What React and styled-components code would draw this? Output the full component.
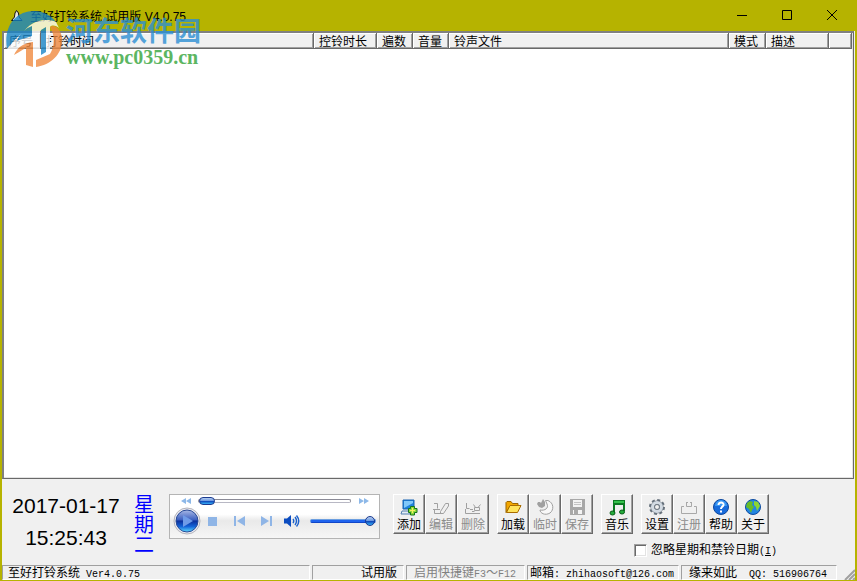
import React, { useState } from 'react'
import styled, { createGlobalStyle } from 'styled-components'

const GlobalStyle = createGlobalStyle`
  * { box-sizing: border-box; }
  body {
    margin: 0;
    background: #f0f0f0;
    color: #000;
    font: 12px/16px "Liberation Sans", "Noto Sans CJK SC", sans-serif;
  }
  button, input { font: inherit; color: inherit; }
`

const Window = styled.div`
  position: relative;
  display: flex;
  flex-direction: column;
  min-height: 100vh;
  border: solid #b6b300;
  border-width: 0 2px 1px 2px;
  background: #f0f0f0;
`

const TitleBar = styled.header`
  display: flex;
  align-items: center;
  height: 31px;
  padding-left: 8px;
  background: #b6b300;
`

const Title = styled.h1`
  flex: 1;
  margin: 0 0 0 6px;
  padding-top: 2px;
  font-size: 12px;
  font-weight: normal;
`

const CaptionButton = styled.button`
  display: flex;
  align-items: center;
  justify-content: center;
  width: 45px;
  height: 30px;
  padding: 0;
  border: 0;
  background: none;
`

const ListFrame = styled.main`
  flex: 1;
  margin-right: 1px;
  border: 1px solid #696969;
  border-top: 2px solid #808080;
  border-left: 2px solid #808080;
  box-shadow: inset -1px -1px #e3e3e3;
  background: #fff;
`

const BellTable = styled.table`
  width: calc(100% - 1px);
  table-layout: fixed;
  border-collapse: separate;
  border-spacing: 0;
`

const HeadCell = styled.th`
  width: ${p => (p.$w ? p.$w + 'px' : 'auto')};
  height: 16px;
  padding: 3px 0 0 5px;
  border: solid #696969;
  border-width: 0 1px 1px 0;
  box-shadow: inset 1px 1px #fff, inset -1px -1px #a0a0a0;
  background: #f0f0f0;
  font-weight: normal;
  line-height: 12px;
  text-align: left;
  white-space: nowrap;
`

const ControlPanel = styled.section`
  display: flex;
  align-items: flex-start;
  height: 85px;
  padding: 15px 8px 0;
`

const Clock = styled.div`
  width: 112px;
  margin-top: -4px;
  font-size: 21px;
  line-height: 32px;
  text-align: center;
  white-space: nowrap;
`

const Weekday = styled.div`
  width: 20px;
  margin: 1px 15px 0 12px;
  color: #00f;
  font-size: 20px;
  line-height: 20px;
`

const Player = styled.div`
  width: 211px;
  height: 45px;
  padding: 0 3px;
  border: 1px solid #b4b4b4;
  background: linear-gradient(#fff 0, #fff 45%, #e9e9e9 60%, #f6f6f6 100%);
`

const PlayerRow = styled.div`
  display: flex;
  align-items: center;
  height: ${p => p.$h}px;
`

const PlayerButton = styled.button`
  display: flex;
  align-items: center;
  justify-content: center;
  flex: none;
  width: ${p => p.$w || 25}px;
  height: 100%;
  padding: 0;
  border: 0;
  background: none;
`

const Slider = styled.input`
  appearance: none;
  flex: 1;
  min-width: 0;
  height: 12px;
  margin: 0 0 0 ${p => (p.$volume ? 4 : 0)}px;
  background: none;

  &::-webkit-slider-runnable-track {
    height: 4px;
    border: 1px solid ${p => (p.$volume ? '#6c9fe0' : '#8a8a96')};
    border-bottom-color: ${p => (p.$volume ? '#1146c8' : '#b8b8c4')};
    border-radius: 2px;
    background: ${p => (p.$volume ? '#1e63ee' : '#fff')};
  }
  &::-webkit-slider-thumb {
    appearance: none;
    width: ${p => (p.$volume ? 10 : 16)}px;
    height: ${p => (p.$volume ? 10 : 8)}px;
    margin-top: ${p => (p.$volume ? -4 : -3)}px;
    border: 1px solid #1a3a90;
    border-radius: 5px;
    background: linear-gradient(#b4cdf2 0, #6f9be0 45%, #0b3cb4 50%, #35b2f8 100%);
  }
`

const ToolBar = styled.div`
  display: flex;
  gap: 8px;
  padding-left: 13px;
`

const ToolGroup = styled.div`
  display: flex;
`

const ToolButton = styled.button`
  display: flex;
  flex-direction: column;
  align-items: center;
  width: 32px;
  height: 40px;
  padding: 4px 0 0;
  border: 1px solid;
  border-color: #fff #696969 #696969 #fff;
  box-shadow: inset -1px -1px #a0a0a0;
  background: #f0f0f0;
  line-height: 16px;
  white-space: nowrap;

  &:disabled { color: #8c8c8c; }
  svg { display: block; margin-bottom: 2px; }
`

const Right = styled.div`
  display: flex;
  flex-direction: column;
`

const IgnoreOption = styled.label`
  display: flex;
  align-items: center;
  align-self: flex-end;
  gap: 4px;
  height: 16px;
  margin: 8px -8px 0 0;
  white-space: nowrap;

  span { padding-top: 1px; }
`

const CheckBox = styled.input`
  appearance: none;
  width: 13px;
  height: 13px;
  margin: 0;
  border: 1px solid;
  border-color: #a0a0a0 #fff #fff #a0a0a0;
  box-shadow: inset 1px 1px #696969, inset -1px -1px #e3e3e3;
  background: #fff;

  &:checked { background: #fff linear-gradient(#000, #000) center / 5px 5px no-repeat; }
`

// half width characters of the status line
const Mono = styled.span`
  font-family: "Liberation Mono", monospace;
  font-size: 10px;
  white-space: pre;
`

const StatusBar = styled.footer`
  display: flex;
  gap: 2px;
  height: 16px;
  padding-top: 1px;
`

const Pane = styled.div`
  flex: ${p => (p.$w ? 'none' : 1)};
  width: ${p => (p.$w ? p.$w + 'px' : 'auto')};
  height: 15px;
  padding: 0 6px 0 ${p => p.$pad || 5}px;
  overflow: hidden;
  border: 1px solid;
  border-color: #a0a0a0 #fff #fff #a0a0a0;
  color: ${p => (p.$muted ? '#808080' : '#000')};
  line-height: 14px;
  text-align: ${p => (p.$right ? 'right' : 'left')};
  white-space: nowrap;
`

const Grip = styled.div`
  display: flex;
  align-items: flex-end;
  justify-content: flex-end;
  width: 16px;
`

const Watermark = styled.div`
  position: absolute;
  top: 10px;
  left: 3px;
  display: flex;
  gap: 3px;
  pointer-events: none;
`

const SiteName = styled.div`
  color: #2c8fd4;
  opacity: 0.8;
  font: bold 27px/40px "Noto Sans CJK SC", sans-serif;
`

const SiteUrl = styled.div`
  color: #5cb662;
  font: bold 20px/14px "Liberation Serif", serif;
`

const BellIcon = () => (
  <svg width="14" height="14" viewBox="0 0 14 14">
    <path d="M6.500 1.500 L8.500 4 L9 8 L12 11.500 H1.500 L4.500 8 L5 4 Z" fill="#ddd" stroke="#111" />
    <path d="M6 4 L5.500 9 L4 10.500 H7 Z" fill="#fff" />
  </svg>
)

const SiteLogo = () => (
  <svg width="58" height="58" viewBox="0 0 58 58" opacity="0.78">
    <path d="M2 39 C-2 16 11 1 29 1 C38 1 46 5 51 12 C38 7 25 12 18 23 C12 27 7 33 2 39 Z" fill="#1684c6" />
    <path d="M2 39 C7 33 12 27 18 23 C25 12 38 7 51 12 L54 18 C50 15 47 15 45 17 V46 L39 49 V19 L35 21 V47 L28 51 V33 C22 34 18 36 15 39 L8 47 Z" fill="#fff" />
    <path d="M12 31 C15 23 21 18 27 16 V26 L21 28 C17 29 14 30 12 31 Z" fill="#1684c6" />
    <path d="M9 45 C12 38 18 33 28 32 V57 L21 55 V38 C17 40 14 42 9 45 Z" fill="#f0873a" />
    <path d="M45 17 C50 14 55 19 57 27 C59 42 47 55 31 57 V50 L45 44 C50 36 50 25 45 17 Z" fill="#f0873a" />
    <path d="M36 20 L41 17 V42 L36 45 Z" fill="#1684c6" />
  </svg>
)

const icons = {
  add: (
    <>
      <path d="M2 1 H13 V10 H2 Z" fill="#1f83dc" stroke="#1662b2" />
      <path d="M3 2 H12 V4 L3 9 Z" fill="#80c8fa" />
      <path d="M1 12 H9 V15 H0 Z" fill="#e4edf5" stroke="#527faf" />
      <path d="M9.500 7.500 H13.500 V9.500 H16 V13.500 H13.500 V16 H9.500 V13.500 H7.500 V9.500 H9.500 Z" fill="#8fdc3c" stroke="#15751d" />
      <path d="M11 9 H12 V11 H14 V12 H12 V14 H11 V12 H9 V11 H11 Z" fill="#f7ee60" />
    </>
  ),
  edit: (
    <g fill="none" stroke="#a0a0a0">
      <path d="M1 4.500 H4.500 V9.500 M0 10.500 H7 M1.500 10 V14.500 H8" />
      <path d="M7.500 12.500 L12.500 4.500 H15.500 V7 L10.500 14.500 H7.500 Z" />
    </g>
  ),
  remove: (
    <g fill="none" stroke="#a0a0a0">
      <path d="M1.500 4 V9.500 H4.500 M0.500 10 V14.500 H15 M5 10.500 H8" />
      <path d="M8.500 5.500 L10.500 8.500 H13 L15.500 5.500 M9.500 8.500 H14.500 V11.500 H9.500 Z M7 12.500 H9.500" />
    </g>
  ),
  open: (
    <>
      <path d="M1 13.500 V3.500 L2 2.500 H6 L7.500 4.500 H13 V7 H5 Z" fill="#f2a600" stroke="#9b6500" />
      <path d="M1.500 13.500 L5 6.500 H16 L12.500 13.500 Z" fill="#ffe35b" stroke="#a96c00" />
    </>
  ),
  temp: (
    <>
      <path d="M1 3 H3 L4 4 L6 0 L8 3 V7 L5 9 L2 8 L0 5 Z" fill="#a0a0a0" />
      <path d="M8.500 1.500 H11 C17 4 17 11 13 14 C8 17 3 14 3 11 C8 12 12 9 10 5 Z" fill="#f8f8f8" stroke="#a0a0a0" />
    </>
  ),
  save: (
    <>
      <path d="M1 0 H16 V16 H1 Z" fill="#a8a8a8" />
      <path d="M4 1 H13 V8 H4 Z M4 11 H13 V15 H4 Z" fill="#f4f4f4" />
      <path d="M5 11 H9 V15 H5 Z" fill="#a8a8a8" />
      <path d="M5 3.500 H12 M5 5.500 H12" stroke="#c4c4c4" />
    </>
  ),
  music: (
    <>
      <path d="M4 1 H16 V12 H14 V6 H6 V14 H4 Z" fill="#0c7a22" />
      <path d="M5 2 H15 V4 H5 Z" fill="#35c24c" />
      <ellipse cx="3.500" cy="14" rx="2.500" ry="2" fill="#25ad3c" stroke="#075c18" />
      <ellipse cx="13" cy="13" rx="2.500" ry="2" fill="#25ad3c" stroke="#075c18" />
    </>
  ),
  settings: (
    <>
      <circle cx="8" cy="8" r="7" fill="none" stroke="#66717c" strokeWidth="2" strokeDasharray="3 2.500" />
      <circle cx="8" cy="8" r="4.500" fill="#fff" stroke="#66717c" strokeWidth="4" />
      <circle cx="8" cy="8" r="4.500" fill="none" stroke="#d3dbe3" strokeWidth="3" />
      <circle cx="8" cy="8" r="2.500" fill="#f0f0f0" stroke="#66717c" />
    </>
  ),
  register: <path d="M5.500 3.500 V7.500 H10.500 V3.500 M5 3.500 H7 M9 3.500 H11 M3 7.500 H0.500 V14.500 H15.500 V7.500 H13" fill="none" stroke="#a8a8a8" />,
  help: (
    <>
      <circle cx="8" cy="8" r="7.500" fill="#176bdc" stroke="#0d489e" />
      <path d="M2 7 A6 6 0 0 1 14 7" fill="#3998f4" />
      <path d="M5.500 6 C5.500 2.500 11 3 10.500 6 C10 8 8 7.500 8 10 M8 11.500 V13.500" fill="none" stroke="#fff" strokeWidth="2" />
    </>
  ),
  about: (
    <>
      <circle cx="8" cy="8" r="7.500" fill="#2386e2" stroke="#0d4ba0" />
      <path d="M2 4 L5 2 L8 3 L7 6 L9 8 L7 11 L6 14 L4 10 L1 8 Z" fill="#68bd28" />
      <path d="M9 2 L13 3 L15 7 L12 12 L11 8 L9 6 Z" fill="#8bd633" />
    </>
  )
}

const Icon = ({ name }) => (
  <svg width="16" height="16" viewBox="0 0 16 16" overflow="visible">{icons[name]}</svg>
)

const columns = [
  ['序号', 37], ['打铃时间', 273], ['控铃时长', 63], ['遍数', 36], ['音量', 36],
  ['铃声文件'], ['模式', 37], ['描述', 63], ['', 23]
]

const tools = [
  [['add', '添加'], ['edit', '编辑', true], ['remove', '删除', true]],
  [['open', '加载'], ['temp', '临时', true], ['save', '保存', true]],
  [['music', '音乐']],
  [['settings', '设置'], ['register', '注册', true], ['help', '帮助'], ['about', '关于']]
]

const MediaPlayer = () => {
  const [position, setPosition] = useState(0)
  const [volume, setVolume] = useState(100)
  return (
    <Player>
      <PlayerRow $h={12}>
        <PlayerButton aria-label="后退">
          <svg width="10" height="6" viewBox="0 0 10 6"><path d="M5 0 V6 L0 3 Z M10 0 V6 L5 3 Z" fill="#8db8e8" /></svg>
        </PlayerButton>
        <Slider type="range" aria-label="进度" value={position} onChange={e => setPosition(e.target.value)} />
        <PlayerButton aria-label="快进">
          <svg width="10" height="6" viewBox="0 0 10 6"><path d="M0 0 V6 L5 3 Z M5 0 V6 L10 3 Z" fill="#8db8e8" /></svg>
        </PlayerButton>
      </PlayerRow>
      <PlayerRow $h={28}>
        <PlayerButton $w={28} aria-label="播放">
          <svg width="28" height="28" viewBox="0 0 28 28">
            <defs>
              <linearGradient id="orb" x2="0" y2="1">
                <stop offset="0" stopColor="#a9b9e6" />
                <stop offset="0.45" stopColor="#3b5fc0" />
                <stop offset="0.5" stopColor="#0b2f9c" />
                <stop offset="0.75" stopColor="#1464d8" />
                <stop offset="1" stopColor="#5fdcff" />
              </linearGradient>
            </defs>
            <circle cx="14" cy="14" r="13" fill="#ececf2" stroke="#b4b4bc" />
            <circle cx="14" cy="14" r="11" fill="url(#orb)" stroke="#294a96" />
            <path d="M10 8 L20 14 L10 20 Z" fill="#6f9be8" />
          </svg>
        </PlayerButton>
        <PlayerButton $w={23} aria-label="停止">
          <svg width="9" height="9"><rect width="9" height="9" fill="#8fb5e6" /></svg>
        </PlayerButton>
        <PlayerButton $w={30} aria-label="上一个">
          <svg width="11" height="10" viewBox="0 0 11 10"><path d="M0 0 H2 V10 H0 Z M11 0 V10 L3 5 Z" fill="#8fb5e6" /></svg>
        </PlayerButton>
        <PlayerButton $w={24} aria-label="下一个">
          <svg width="11" height="10" viewBox="0 0 11 10"><path d="M0 0 V10 L8 5 Z M9 0 H11 V10 H9 Z" fill="#8fb5e6" /></svg>
        </PlayerButton>
        <PlayerButton $w={28} aria-label="静音">
          <svg width="16" height="12" viewBox="0 0 16 12">
            <path d="M0 3.500 H3 L7 0 V12 L3 8.500 H0 Z" fill="#0b4cc0" />
            <path d="M9 4 Q10.500 6 9 8 M11 2 Q14 6 11 10 M12.500 0.500 Q17 6 12.500 11.500" fill="none" stroke="#1d62cc" strokeWidth="1.400" />
          </svg>
        </PlayerButton>
        <Slider $volume type="range" aria-label="音量" value={volume} onChange={e => setVolume(e.target.value)} />
      </PlayerRow>
    </Player>
  )
}

export default function App() {
  const [ignore, setIgnore] = useState(false)
  return (
    <>
      <GlobalStyle />
      <Window>
        <TitleBar>
          <BellIcon />
          <Title>至好打铃系统 试用版 V4.0.75</Title>
          <CaptionButton aria-label="最小化">
            <svg width="11" height="11"><path d="M0 5.500 H10" stroke="#000" /></svg>
          </CaptionButton>
          <CaptionButton aria-label="最大化">
            <svg width="11" height="11"><path d="M0.500 0.500 H9.500 V9.500 H0.500 Z" fill="none" stroke="#000" /></svg>
          </CaptionButton>
          <CaptionButton aria-label="关闭">
            <svg width="11" height="11"><path d="M0 0 L10 10 M10 0 L0 10" stroke="#000" /></svg>
          </CaptionButton>
        </TitleBar>

        <ListFrame>
          <BellTable>
            <thead>
              <tr>
                {columns.map(([label, w], i) => <HeadCell key={i} $w={w}>{label}</HeadCell>)}
              </tr>
            </thead>
          </BellTable>
        </ListFrame>

        <ControlPanel>
          <Clock>
            <div>2017-01-17</div>
            <div>15:25:43</div>
          </Clock>
          <Weekday>星期二</Weekday>
          <MediaPlayer />
          <Right>
            <ToolBar>
              {tools.map((group, i) => (
                <ToolGroup key={i}>
                  {group.map(([icon, label, off]) => (
                    <ToolButton key={icon} disabled={off}><Icon name={icon} />{label}</ToolButton>
                  ))}
                </ToolGroup>
              ))}
            </ToolBar>
            <IgnoreOption>
              <CheckBox type="checkbox" checked={ignore} onChange={e => setIgnore(e.target.checked)} />
              <span>忽略星期和禁铃日期<Mono>(<u>I</u>)</Mono></span>
            </IgnoreOption>
          </Right>
        </ControlPanel>

        <StatusBar>
          <Pane>至好打铃系统<Mono> Ver4.0.75</Mono></Pane>
          <Pane $w={92} $right>试用版</Pane>
          <Pane $w={119} $muted $pad={7}>启用快捷键<Mono>F3</Mono>～<Mono>F12</Mono></Pane>
          <Pane $w={152} $pad={2}>邮箱<Mono>: zhihaosoft@126.com</Mono></Pane>
          <Pane $w={156} $pad={7}>缘来如此<Mono>  QQ: 516906764</Mono></Pane>
          <Grip>
            <svg width="12" height="12"><path d="M2 12 L12 2 M6 12 L12 6 M10 12 L12 10" stroke="#a0a0a0" strokeWidth="2" /></svg>
          </Grip>
        </StatusBar>

        <Watermark>
          <SiteLogo />
          <div>
            <SiteName>河东软件园</SiteName>
            <SiteUrl>www.pc0359.cn</SiteUrl>
          </div>
        </Watermark>
      </Window>
    </>
  )
}
